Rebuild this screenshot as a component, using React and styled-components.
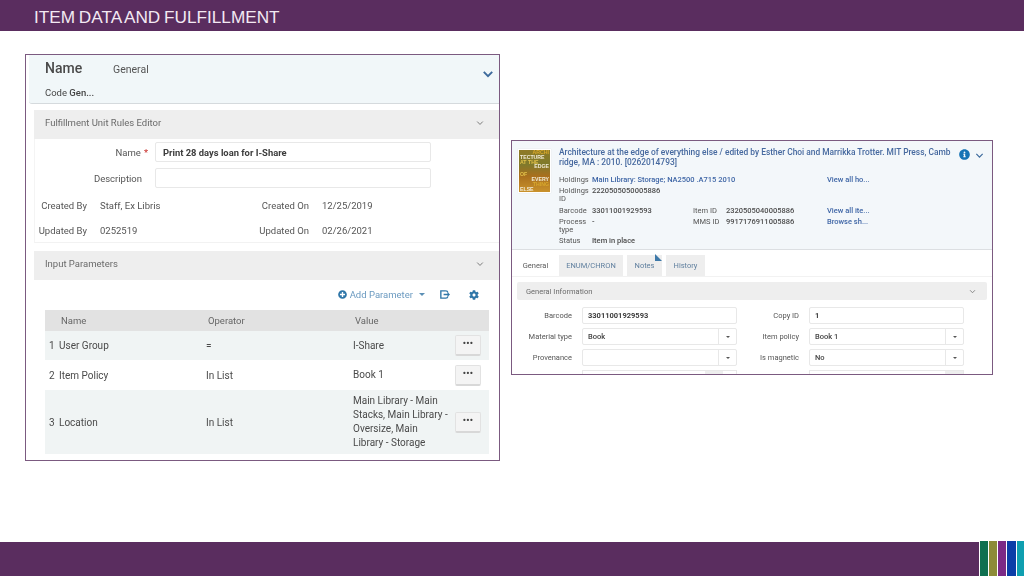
import React from 'react';
import styled, { createGlobalStyle } from 'styled-components';
import { FaPlusCircle, FaCog, FaInfoCircle } from 'react-icons/fa';

const GlobalStyle = createGlobalStyle`
html, body { margin:0; padding:0; background:#fff; }
body { font-family:"Roboto","Liberation Sans",sans-serif; }
* { box-sizing:border-box; }
`;

const Page = styled.div`
display:flex;
flex-direction:column;
width:1024px;
height:576px;
overflow:hidden;
`;

const TopBar = styled.header`
height:31px;
background:#5a2d5f;
color:#f3e9f3;
font-family:"Liberation Sans",Arial,sans-serif;
font-size:17.2px;
line-height:35px;
padding-left:34px;
word-spacing:-1px;
flex:none;
`;

const Main = styled.main`
flex:1;
display:flex;
align-items:flex-start;
gap:11px;
padding:23px 0 0 25px;
`;

const Footer = styled.footer`
height:34px;
flex:none;
background:#5a2d5f;
display:flex;
justify-content:flex-end;
`;

const Stripes = styled.div`
display:flex;
gap:1px;
margin-top:-1px;
height:35px;
padding-left:1px;
background:#fff;
`;

const Stripe = styled.div`
width:${(p) => p.$w}px;
background:${(p) => p.$c};
`;

/* left window */
const LeftPanel = styled.section`
width:475px;
height:407px;
border:1px solid #7b5a80;
overflow:hidden;
background:#fff;
filter:blur(.3px);
`;

const NameCard = styled.div`
height:49px;
margin:0 0 0 3px;
background:#f1f7f9;
border-bottom:1px solid #d5dadd;
border-radius:0 0 0 3px;
padding:0 0 0 16px;
position:relative;
color:#454545;
`;

const NameRow = styled.div`
display:flex;
align-items:center;
height:27px;
font-size:10.5px;
padding-top:1px;
color:#555;
`;

const BigName = styled.span`
font-size:14px;
font-weight:500;
color:#4a4a4a;
width:68px;
margin-top:-3px;
`;

const CodeRow = styled.div`
font-size:9.5px;
line-height:12px;
margin-top:5px;
`;

const CodeValue = styled.b`
font-weight:500;
`;

const CardChevron = styled.svg`
position:absolute;
right:5px;
top:13px;
`;

const SectionBar = styled.div`
display:flex;
justify-content:space-between;
align-items:center;
height:${(p) => p.$h}px;
margin:${(p) => p.$m};
background:#eeeeee;
padding:0 15px 4px 11px;
font-size:9.5px;
color:#6a6a6a;
`;

const FormBlock = styled.div`
margin-left:8px;
height:104px;
padding-top:3px;
border-left:1px solid #f4f4f4;
border-bottom:1px solid #f2f2f2;
`;

const FieldRow = styled.div`
display:flex;
align-items:center;
height:20px;
margin-bottom:6px;
font-size:9.5px;
color:#555;
`;

const FieldLabel = styled.div`
width:${(p) => p.$w}px;
text-align:right;
flex:none;
`;

const Star = styled.span`
color:#c9302c;
margin-left:3px;
`;

const TextBox = styled.div`
width:${(p) => p.$w}px;
height:${(p) => p.$h || 20}px;
margin-left:${(p) => p.$ml || 0}px;
border:1px solid #e8e8e8;
border-radius:2px;
background:#fff;
padding-left:${(p) => p.$pad || 7}px;
font-size:${(p) => p.$size || 10}px;
font-weight:700;
color:#3c3c3c;
display:flex;
align-items:center;
`;

const MetaGrid = styled.div`
display:grid;
grid-template-columns:52px 136px 60px 1fr;
column-gap:13px;
row-gap:14px;
font-size:9.5px;
line-height:11px;
color:#555;
margin-top:12px;
`;

const MetaLabel = styled.div`
text-align:right;
`;

const Toolbar = styled.div`
display:flex;
justify-content:flex-end;
align-items:center;
height:30px;
padding:0 20px 1px 0;
color:#5b8fb5;
font-size:9.5px;
`;

const AddButton = styled.div`
display:flex;
align-items:center;
gap:3px;
color:#2f76a8;
margin-right:14px;
`;

const AddText = styled.span`
color:#6b9ac0;
`;

const Caret = styled.span`
width:0;
height:0;
margin-left:3px;
border-left:3px solid transparent;
border-right:3px solid transparent;
border-top:3px solid #5b8fb5;
`;

const ExportIcon = styled.svg`
margin-right:19px;
`;

const GearIcon = styled(FaCog)`
color:#2f76a8;
`;

const ParamTable = styled.div`
margin:0 10px 0 19px;
font-size:10px;
color:#4a4a4a;
`;

const ParamHead = styled.div`
display:grid;
grid-template-columns:147px 147px 1fr;
align-items:center;
height:21px;
background:#e2e2e2;
padding-left:16px;
color:#666;
font-size:9.5px;
`;

const ParamRow = styled.div`
display:grid;
grid-template-columns:10px 147px 147px 96px 1fr;
align-items:center;
height:${(p) => p.$h}px;
padding-left:4px;
background:${(p) => (p.$odd ? '#f0f4f4' : '#ffffff')};
`;

const ValueText = styled.div`
line-height:14px;
`;

const DotsButton = styled.div`
width:26px;
height:21px;
margin-left:6px;
background:#f4f4f4;
border:1px solid #e2e2e2;
border-bottom:2px solid #d8d8d8;
border-radius:2px;
display:flex;
align-items:center;
justify-content:center;
font-size:9px;
font-weight:700;
letter-spacing:.3px;
line-height:9px;
padding-bottom:3px;
color:#444;
`;

/* right window */
const RightPanel = styled.section`
width:482px;
height:235px;
margin-top:86px;
border:1px solid #7b5a80;
overflow:hidden;
background:#fff;
filter:blur(.3px);
`;

const ItemSummary = styled.div`
height:109px;
background:#f3f7fa;
border-bottom:1px solid #dcdfe2;
display:flex;
position:relative;
padding:8px 0 0 6px;
`;

const Cover = styled.div`
width:33px;
height:44px;
background:linear-gradient(180deg,#8f7a26 0%,#7f7a2c 34%,#a96f1d 62%,#c9922c 100%);
border:1px solid #fff;
box-shadow:0 0 1px #ddd;
padding:0 1px;
font-family:"Liberation Sans",sans-serif;
font-weight:700;
font-size:5.2px;
line-height:4.8px;
overflow:hidden;
flex:none;
`;

const CoverLine = styled.div`
color:${(p) => p.$c || '#f2ecd8'};
text-align:${(p) => p.$a || 'left'};
margin-top:${(p) => p.$mt || 0}px;
white-space:nowrap;
`;

const SummaryBody = styled.div`
margin-left:8px;
width:400px;
font-size:7.5px;
line-height:8px;
color:#555;
`;

const ItemTitle = styled.div`
font-size:8.4px;
line-height:10px;
color:#46699f;
font-weight:500;
white-space:nowrap;
margin:-2px 0 9px 0;
`;

const SummaryGrid = styled.div`
display:grid;
grid-template-columns:33px 101px 33px 101px 1fr;
row-gap:3.3px;
align-items:start;
`;

const SummaryValue = styled.div`
font-weight:500;
color:#4c4c4c;
grid-column:span ${(p) => p.$span || 1};
`;

const HoldingLink = styled.div`
font-weight:500;
color:#3f66a6;
white-space:nowrap;
grid-column:span ${(p) => p.$span || 1};
`;

const InfoIcon = styled(FaInfoCircle)`
position:absolute;
left:447px;
top:8px;
color:#1673b5;
`;

const SummaryChevron = styled.svg`
position:absolute;
left:463px;
top:10px;
`;

const TabRow = styled.div`
display:flex;
height:27px;
padding:5px 0 0 7px;
gap:4px;
border-bottom:1px solid #f2f2f2;
position:relative;
`;

const Tab = styled.div`
width:${(p) => p.$w}px;
margin-right:${(p) => p.$mr || 0}px;
background:${(p) => (p.$active ? '#fff' : '#eeeeee')};
color:${(p) => (p.$active ? '#5b5b5b' : '#5f7f9e')};
font-size:7.5px;
display:flex;
align-items:center;
justify-content:center;
`;

const TabMark = styled.div`
position:absolute;
left:143px;
top:4px;
width:0;
height:0;
border-left:7px solid transparent;
border-bottom:7px solid #3d78a8;
transform:rotate(90deg);
`;

const GeneralBar = styled.div`
display:flex;
justify-content:space-between;
align-items:center;
height:18px;
margin:5px 5px 0;
background:#eeeeee;
border-radius:2px;
padding:0 11px 0 9px;
font-size:7.5px;
color:#6b6b6b;
`;

const FieldGrid = styled.div`
display:grid;
grid-template-columns:227px 1fr;
padding:7px 0 0 0;
`;

const FieldColumn = styled.div`
display:grid;
grid-template-columns:${(p) => p.$label}px 155px;
column-gap:10px;
row-gap:4px;
align-items:center;
font-size:7.5px;
color:#555;
`;

const SmallLabel = styled.div`
text-align:right;
`;

const SelectBox = styled.div`
height:17px;
display:flex;
border:1px solid #e8e8e8;
border-radius:2px;
background:#fff;
font-size:7.5px;
font-weight:500;
color:#444;
`;

const SelectText = styled.div`
flex:1;
padding-left:5px;
line-height:15px;
`;

const SelectArrow = styled.div`
width:18px;
border-left:1px solid #e8e8e8;
display:flex;
align-items:center;
justify-content:center;
`;

const MiniCaret = styled.span`
width:0;
height:0;
border-left:2px solid transparent;
border-right:2px solid transparent;
border-top:2px solid #555;
`;

const CutRow = styled.div`
height:17px;
display:flex;
justify-content:flex-end;
border:1px solid #e8e8e8;
border-bottom:none;
padding-right:${(p) => p.$right}px;
`;

const CutButton = styled.div`
width:18px;
background:#eeeeee;
`;

function Chevron({ as: Comp = 'svg', color = '#777', size = 8, stroke = 1.2 }) {
  return (
    <Comp width={size} height={size} viewBox="0 0 10 10" fill="none">
      <path d="M1.5 3.2 5 6.8 8.5 3.2" stroke={color} strokeWidth={stroke} />
    </Comp>
  );
}

const params = [
  { id: 1, name: 'User Group', op: '=', value: 'I-Share', h: 29, odd: true },
  { id: 2, name: 'Item Policy', op: 'In List', value: 'Book 1', h: 30 },
  {
    id: 3,
    name: 'Location',
    op: 'In List',
    value: 'Main Library - Main Stacks, Main Library - Oversize, Main Library - Storage',
    h: 64,
    odd: true,
  },
];

function Select({ value }) {
  return (
    <SelectBox>
      <SelectText>{value}</SelectText>
      <SelectArrow><MiniCaret /></SelectArrow>
    </SelectBox>
  );
}

export default function App() {
  return (
    <Page>
      <GlobalStyle />
      <TopBar>ITEM DATA AND FULFILLMENT</TopBar>
      <Main>
        <LeftPanel>
          <NameCard>
            <NameRow>
              <BigName>Name</BigName>
              <span>General</span>
            </NameRow>
            <CodeRow>Code <CodeValue>Gen...</CodeValue></CodeRow>
            <Chevron as={CardChevron} color="#3d6a9c" size={12} stroke={1.6} />
          </NameCard>
          <SectionBar $h={29} $m="6px 0 0 8px">
            Fulfillment Unit Rules Editor
            <Chevron />
          </SectionBar>
          <FormBlock>
            <FieldRow>
              <FieldLabel $w={113}>Name<Star>*</Star></FieldLabel>
              <TextBox $w={276} $ml={7} $size={9.4}>Print 28 days loan for I-Share</TextBox>
            </FieldRow>
            <FieldRow>
              <FieldLabel $w={107}>Description</FieldLabel>
              <TextBox $w={276} $ml={13} />
            </FieldRow>
            <MetaGrid>
              <MetaLabel>Created By</MetaLabel>
              <div>Staff, Ex Libris</div>
              <MetaLabel>Created On</MetaLabel>
              <div>12/25/2019</div>
              <MetaLabel>Updated By</MetaLabel>
              <div>0252519</div>
              <MetaLabel>Updated On</MetaLabel>
              <div>02/26/2021</div>
            </MetaGrid>
          </FormBlock>
          <SectionBar $h={29} $m="8px 0 0 8px">
            Input Parameters
            <Chevron />
          </SectionBar>
          <Toolbar>
            <AddButton>
              <FaPlusCircle size={9} />
              <AddText>Add Parameter</AddText>
              <Caret />
            </AddButton>
            <ExportIcon width="11" height="11" viewBox="0 0 12 12" fill="none" stroke="#2f76a8" strokeWidth="1.5">
              <path d="M7.5 2H2v8h5.5C8.8 10 9.5 9 9.7 8" />
              <path d="M7.5 2C8.8 2 9.5 3 9.7 4" />
              <path d="M5 6h6M9.5 4.5 11 6 9.5 7.5" />
            </ExportIcon>
            <GearIcon size={10} />
          </Toolbar>
          <ParamTable>
            <ParamHead>
              <div>Name</div>
              <div>Operator</div>
              <div>Value</div>
            </ParamHead>
            {params.map((row) => (
              <ParamRow key={row.id} $h={row.h} $odd={row.odd}>
                <div>{row.id}</div>
                <div>{row.name}</div>
                <div>{row.op}</div>
                <ValueText>{row.value}</ValueText>
                <DotsButton>•••</DotsButton>
              </ParamRow>
            ))}
          </ParamTable>
        </LeftPanel>

        <RightPanel>
          <ItemSummary>
            <Cover>
              <CoverLine $c="#d9a92c" $a="right">ARCHI</CoverLine>
              <CoverLine>TECTURE</CoverLine>
              <CoverLine $c="#e3c24a">AT THE</CoverLine>
              <CoverLine $a="right">EDGE</CoverLine>
              <CoverLine $c="#e3c24a" $mt={3}>OF</CoverLine>
              <CoverLine $a="right">EVERY</CoverLine>
              <CoverLine $c="#d9a92c" $a="right">THING</CoverLine>
              <CoverLine>ELSE</CoverLine>
            </Cover>
            <SummaryBody>
              <ItemTitle>
                Architecture at the edge of everything else / edited by Esther Choi and Marrikka Trotter. MIT Press, Camb
                <br />
                ridge, MA : 2010. [0262014793]
              </ItemTitle>
              <SummaryGrid>
                <div>Holdings</div>
                <HoldingLink $span={3}>Main Library: Storage; NA2500 .A715 2010</HoldingLink>
                <HoldingLink>View all ho...</HoldingLink>
                <div>Holdings ID</div>
                <SummaryValue $span={4}>2220505050005886</SummaryValue>
                <div>Barcode</div>
                <SummaryValue>33011001929593</SummaryValue>
                <div>Item ID</div>
                <SummaryValue>2320505040005886</SummaryValue>
                <HoldingLink>View all ite...</HoldingLink>
                <div>Process type</div>
                <SummaryValue>-</SummaryValue>
                <div>MMS ID</div>
                <SummaryValue>9917176911005886</SummaryValue>
                <HoldingLink>Browse sh...</HoldingLink>
                <div>Status</div>
                <SummaryValue $span={4}>Item in place</SummaryValue>
              </SummaryGrid>
            </SummaryBody>
            <InfoIcon size={11} />
            <Chevron as={SummaryChevron} color="#3d6a9c" size={9} stroke={1.3} />
          </ItemSummary>
          <TabRow>
            <Tab $active $w={33} $mr={3}>General</Tab>
            <Tab $w={64}>ENUM/CHRON</Tab>
            <Tab $w={35}>Notes</Tab>
            <Tab $w={39}>History</Tab>
            <TabMark />
          </TabRow>
          <GeneralBar>
            General Information
            <Chevron size={7} />
          </GeneralBar>
          <FieldGrid>
            <FieldColumn $label={60}>
              <SmallLabel>Barcode</SmallLabel>
              <TextBox $w={155} $h={17} $size={7.5} $pad={5}>33011001929593</TextBox>
              <SmallLabel>Material type</SmallLabel>
              <Select value="Book" />
              <SmallLabel>Provenance</SmallLabel>
              <Select value="" />
              <span />
              <CutRow $right={13}><CutButton /></CutRow>
            </FieldColumn>
            <FieldColumn $label={60}>
              <SmallLabel>Copy ID</SmallLabel>
              <TextBox $w={155} $h={17} $size={7.5} $pad={5}>1</TextBox>
              <SmallLabel>Item policy</SmallLabel>
              <Select value="Book 1" />
              <SmallLabel>Is magnetic</SmallLabel>
              <Select value="No" />
              <span />
              <CutRow $right={0}><CutButton /></CutRow>
            </FieldColumn>
          </FieldGrid>
        </RightPanel>
      </Main>
      <Footer>
        <Stripes>
          <Stripe $w={8} $c="#0f7050" />
          <Stripe $w={8} $c="#8d8b38" />
          <Stripe $w={8} $c="#7b2a86" />
          <Stripe $w={9} $c="#0b3ea8" />
          <Stripe $w={7} $c="#0f9fb0" />
        </Stripes>
      </Footer>
    </Page>
  );
}
